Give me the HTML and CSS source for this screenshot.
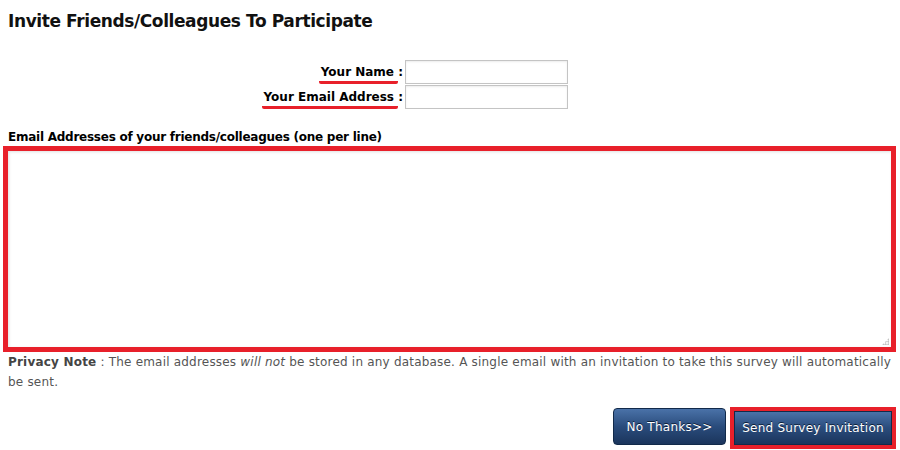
FILE: index.html
```html
<!DOCTYPE html>
<html>
<head>
<meta charset="utf-8">
<link rel="stylesheet" href="styles.css">
</head>
<body>
<h1 class="title">Invite Friends/Colleagues To Participate</h1>
<div class="fields">
  <div class="row">
    <label class="lbl"><span class="mark">Your Name </span>:</label>
    <input class="inp" type="text">
  </div>
  <div class="row">
    <label class="lbl"><span class="mark">Your Email Address </span>:</label>
    <input class="inp" type="text">
  </div>
</div>
<div class="emails-label">Email Addresses of your friends/colleagues (one per line)</div>
<div class="hl">
  <textarea class="emails"></textarea>
</div>
<p class="privacy"><b>Privacy Note</b> : The email addresses <i>will not</i> be stored in any database. A single email with an invitation to take this survey will automatically be sent.</p>
<div class="actions">
  <button class="btn btn-no">No Thanks&gt;&gt;</button>
  <div class="hl-btn"><button class="btn">Send Survey Invitation</button></div>
</div>
</body>
</html>
```
FILE: styles.css
```css
html, body { margin: 0; padding: 0; background: #fff; }
body {
  width: 900px; height: 450px; overflow: hidden;
  font-family: "DejaVu Sans", Verdana, sans-serif;
  color: #000;
  padding: 0 8px; box-sizing: border-box;
}
.title {
  margin: 0; padding-top: 10px;
  font-size: 17px; font-weight: bold; line-height: 22px;
  letter-spacing: -0.4px;
  color: #111;
}
.fields {
  margin-top: 27px;
  display: flex; flex-direction: column; align-items: flex-end;
  width: 560px;
}
.row { display: flex; align-items: center; height: 25px; }
.lbl { font-size: 12px; font-weight: bold; margin-right: 2px; }
.mark { border-bottom: 3px solid #e8202a; border-radius: 2px; padding: 0 0 2px 2px; }
.inp {
  width: 163px; height: 24px; box-sizing: border-box; margin: 0;
  border: 1px solid #c4c4c4; box-shadow: inset 0 1px 2px rgba(0,0,0,.08);
}
.emails-label {
  margin-top: 21px; font-size: 12px; font-weight: bold; letter-spacing: -0.25px;
}
.hl {
  position: relative;
  margin: 2px 0 0 -5px; width: 893px; height: 206px; box-sizing: border-box;
  border: 5px solid #e8202a;
}
.hl::after {
  content: ""; position: absolute; right: 2px; bottom: 2px; width: 7px; height: 7px;
  background:
    radial-gradient(circle, #b8b8b8 0.8px, transparent 1px) 0 0 / 2.5px 2.5px;
  clip-path: polygon(100% 0, 100% 100%, 0 100%);
}
.emails {
  display: block; width: 100%; height: 100%; box-sizing: border-box; margin: 0;
  border: 0; box-shadow: inset 1px 1px 3px rgba(0,0,0,.12); resize: none;
}
.privacy {
  margin: 0; font-size: 12px; line-height: 20px; color: #555;
  letter-spacing: 0.2px;
}
.privacy b { color: #444; }
.actions {
  display: flex; justify-content: flex-end; align-items: flex-start; gap: 4px;
  margin-top: 15px; margin-right: -4px;
}
.btn {
  font-family: "DejaVu Sans", Verdana, sans-serif; font-size: 12px;
  letter-spacing: 0.25px;
  color: #fff; text-shadow: 0 -1px 0 #0d1f3a;
  background: linear-gradient(#4a72a8, #2a4c7c 50%, #1b355c);
  border: 1px solid #122a4a; border-radius: 4px;
  height: 37px; padding: 0 11px; cursor: pointer;
}
.btn-no { margin-top: 1px; width: 113px; padding: 0; }
.hl-btn { border: 4px solid #e8202a; }
.hl-btn .btn { border-radius: 0; height: 34px; width: 158px; padding: 0; display: block; }
```
